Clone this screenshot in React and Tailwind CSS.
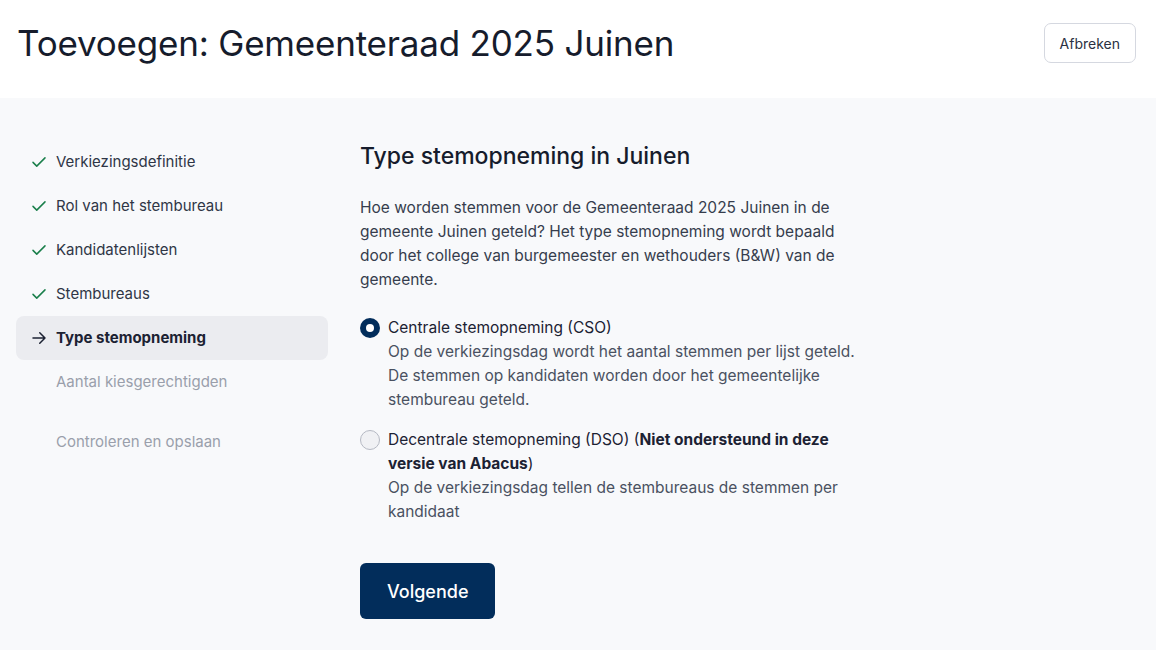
import React from "react";

function Check() {
  return (
    <svg width="18" height="18" viewBox="0 0 24 24" fill="none" stroke="#1a7f4b" strokeWidth="2" strokeLinecap="round" strokeLinejoin="round">
      <path d="M4 12.5l5 5L20 6.5" />
    </svg>
  );
}

function Arrow() {
  return (
    <svg width="18" height="18" viewBox="0 0 24 24" fill="none" stroke="#1c2233" strokeWidth="2" strokeLinecap="round" strokeLinejoin="round">
      <path d="M4 12h16M13 5l7 7-7 7" />
    </svg>
  );
}

export default function App() {
  const done = ["Verkiezingsdefinitie", "Rol van het stembureau", "Kandidatenlijsten", "Stembureaus"];
  return (
    <div className="min-h-[650px] w-[1156px] bg-[#f8f9fb] text-[#1c2233]" style={{ fontFamily: "Inter, 'Noto Sans', sans-serif" }}>
      <header className="flex h-[98px] items-start justify-between bg-white pl-[17px] pr-[20px] pt-[22px]">
        <h1 className="text-[35px] font-normal leading-[42px] tracking-[-0.2px] text-[#161c2c]">Toevoegen: Gemeenteraad 2025 Juinen</h1>
        <button className="mt-[1px] h-[40px] rounded-[7px] border border-[#d5d8e0] bg-white px-[15px] text-[14px] font-normal text-[#2a3142]">Afbreken</button>
      </header>
      <div className="flex pt-[42px]">
        <nav className="ml-[16px] flex w-[312px] flex-col">
          {done.map((t) => (
            <div key={t} className="flex h-[44px] items-center gap-[8px] pl-[14px] text-[15px] text-[#2f3646]">
              <Check />
              <span>{t}</span>
            </div>
          ))}
          <div className="flex h-[44px] items-center gap-[8px] rounded-[8px] bg-[#ebecf0] pl-[14px] text-[15px] font-bold text-[#1c2233]">
            <Arrow />
            <span>Type stemopneming</span>
          </div>
          <div className="flex h-[44px] items-center pl-[40px] text-[15px] text-[#9a9fab]">Aantal kiesgerechtigden</div>
          <div className="mt-[16px] flex h-[44px] items-center pl-[40px] text-[15px] text-[#9a9fab]">Controleren en opslaan</div>
        </nav>
        <main className="ml-[32px] w-[510px]">
          <h2 className="text-[23px] font-medium leading-[32px] text-[#161c2c]">Type stemopneming in Juinen</h2>
          <p className="mt-[24px] text-[15.5px] leading-[24px] text-[#363d4d]">
            Hoe worden stemmen voor de Gemeenteraad 2025 Juinen in de gemeente Juinen geteld? Het type stemopneming wordt bepaald door het college van burgemeester en wethouders (B&amp;W) van de gemeente.
          </p>
          <div className="mt-[24px] flex flex-col gap-[16px]">
            <label className="flex gap-[8px]">
              <span className="mt-[2px] flex h-[20px] w-[20px] shrink-0 items-center justify-center rounded-full bg-[#022d5b]">
                <span className="h-[8px] w-[8px] rounded-full bg-white" />
              </span>
              <span className="text-[15.5px] leading-[24px]">
                <span className="block text-[#1c2233]">Centrale stemopneming (CSO)</span>
                <span className="block text-[#4a5161]">Op de verkiezingsdag wordt het aantal stemmen per lijst geteld. De stemmen op kandidaten worden door het gemeentelijke stembureau geteld.</span>
              </span>
            </label>
            <label className="flex gap-[8px]">
              <span className="mt-[2px] h-[20px] w-[20px] shrink-0 rounded-full border border-[#b5b9c3] bg-[#f0f1f4]" />
              <span className="text-[15.5px] leading-[24px]">
                <span className="block text-[#1c2233]">Decentrale stemopneming (DSO) (<b className="font-bold">Niet ondersteund in deze versie van Abacus</b>)</span>
                <span className="block text-[#4a5161]">Op de verkiezingsdag tellen de stembureaus de stemmen per kandidaat</span>
              </span>
            </label>
          </div>
          <button className="mt-[39px] h-[56px] rounded-[6px] bg-[#022d5b] px-[27px] text-[18px] font-medium text-white">Volgende</button>
        </main>
      </div>
    </div>
  );
}
